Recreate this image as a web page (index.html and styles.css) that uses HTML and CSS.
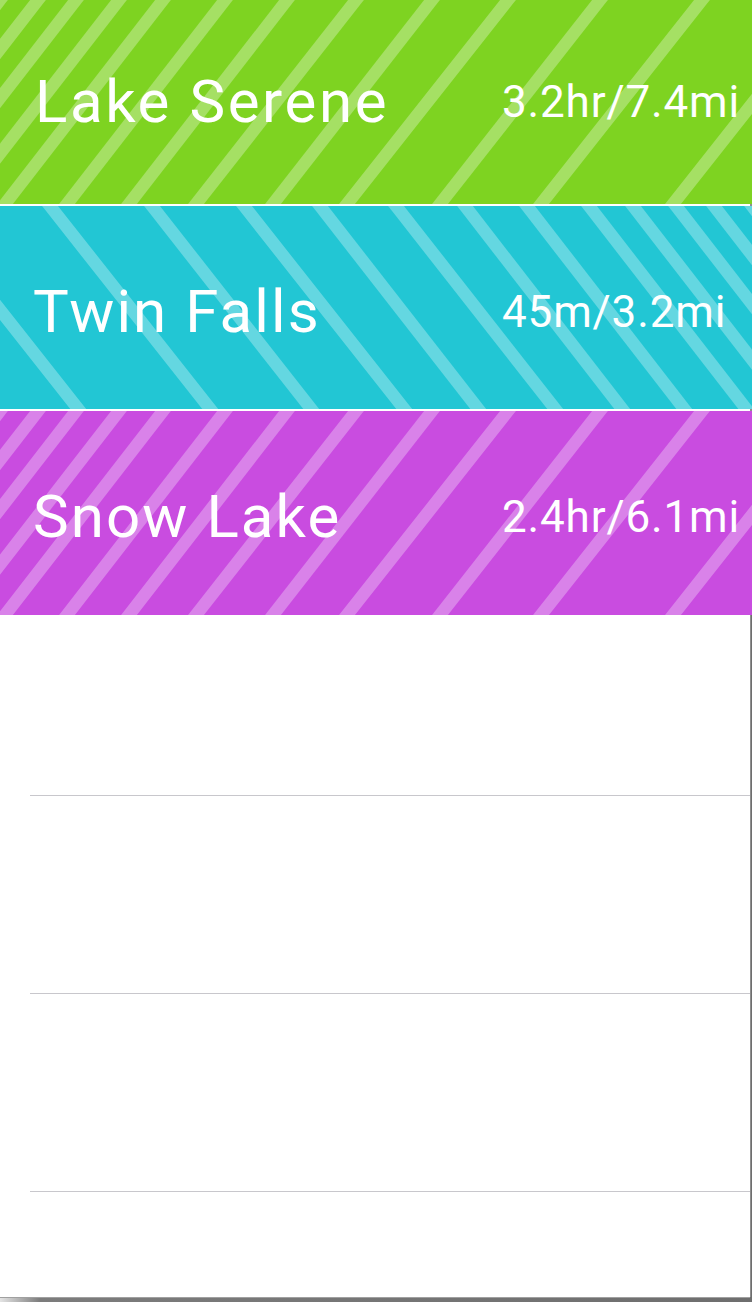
FILE: index.html
```html
<!DOCTYPE html>
<html lang="en">
<head>
<meta charset="utf-8">
<title>Hikes</title>
<link rel="stylesheet" href="styles.css">
</head>
<body>
<div class="window">
  <div class="screen">
    <ul class="hikes">
      <li class="hike hike--green">
        <span class="hike__name hike__name--wide">Lake Serene</span>
        <span class="hike__time">3.2hr/7.4mi</span>
      </li>
      <li class="hike hike--cyan hike--low">
        <span class="hike__name">Twin Falls</span>
        <span class="hike__time">45m/3.2mi</span>
      </li>
      <li class="hike hike--magenta hike--low">
        <span class="hike__name">Snow Lake</span>
        <span class="hike__time">2.4hr/6.1mi</span>
      </li>
    </ul>
    <div class="empty">
      <div class="empty__row empty__row--first"></div>
      <div class="empty__row"></div>
      <div class="empty__row"></div>
      <div class="empty__row empty__row--last"></div>
    </div>
  </div>
</div>
</body>
</html>
```

FILE: styles.css
```css
* { box-sizing: border-box; }

html, body {
  margin: 0;
  padding: 0;
  background: #ffffff;
}

body {
  font-family: Roboto, "Noto Sans", "Liberation Sans", sans-serif;
}

.window {
  width: 752px;
  height: 1302px;
  background: linear-gradient(to right, #e4e4e4 0px, #7c7c7c 40px, #6e6e6e 100%);
  overflow: hidden;
}

.screen {
  width: 750px;
  height: 1297px;
  background: #ffffff;
  box-shadow: 1px 0 0 #8f8f8f, 0 1px 0 #a0a0a0;
}

.hikes {
  list-style: none;
  margin: 0 -2px 0 0;
  padding: 0;
  display: flex;
  flex-direction: column;
  gap: 2px;
  background: linear-gradient(to right, #ffffff 750px, #8f8f8f 750px);
}

.hike {
  height: 204px;
  display: flex;
  align-items: center;
  padding-left: 33px;
  color: #ffffff;
  background-repeat: no-repeat;
  background-size: 752px 204px;
}

.hike--low {
  padding-top: 8px;
}

.hike--cyan {
  height: 203px;
}

.hike--green {
  background-color: #7ed321;
  background-image: url("data:image/svg+xml,%3Csvg xmlns='http://www.w3.org/2000/svg' width='752' height='204' viewBox='0 0 752 204'%3E%3Cg stroke='white' stroke-opacity='0.3' stroke-width='12.5' stroke-linecap='square'%3E%3Cline x1='0' y1='0' x2='-158' y2='204'/%3E%3Cline x1='38' y1='0' x2='-120' y2='204'/%3E%3Cline x1='76' y1='0' x2='-82' y2='204'/%3E%3Cline x1='119' y1='0' x2='-39' y2='204'/%3E%3Cline x1='163' y1='0' x2='5' y2='204'/%3E%3Cline x1='225' y1='0' x2='67' y2='204'/%3E%3Cline x1='287' y1='0' x2='129' y2='204'/%3E%3Cline x1='356' y1='0' x2='196' y2='204'/%3E%3Cline x1='432' y1='0' x2='273' y2='204'/%3E%3Cline x1='508' y1='0' x2='347' y2='204'/%3E%3Cline x1='600' y1='0' x2='440' y2='204'/%3E%3Cline x1='702' y1='0' x2='541' y2='204'/%3E%3Cline x1='834' y1='0' x2='673' y2='204'/%3E%3Cline x1='980' y1='0' x2='820' y2='204'/%3E%3C/g%3E%3C/svg%3E");
}

.hike--magenta {
  background-color: #c94ce0;
  background-image: url("data:image/svg+xml,%3Csvg xmlns='http://www.w3.org/2000/svg' width='752' height='204' viewBox='0 0 752 204'%3E%3Cg stroke='white' stroke-opacity='0.3' stroke-width='12.5' stroke-linecap='square'%3E%3Cline x1='0' y1='0' x2='-158' y2='204'/%3E%3Cline x1='38' y1='0' x2='-120' y2='204'/%3E%3Cline x1='76' y1='0' x2='-82' y2='204'/%3E%3Cline x1='119' y1='0' x2='-39' y2='204'/%3E%3Cline x1='163' y1='0' x2='5' y2='204'/%3E%3Cline x1='225' y1='0' x2='67' y2='204'/%3E%3Cline x1='287' y1='0' x2='129' y2='204'/%3E%3Cline x1='356' y1='0' x2='196' y2='204'/%3E%3Cline x1='432' y1='0' x2='273' y2='204'/%3E%3Cline x1='508' y1='0' x2='347' y2='204'/%3E%3Cline x1='600' y1='0' x2='440' y2='204'/%3E%3Cline x1='702' y1='0' x2='541' y2='204'/%3E%3Cline x1='834' y1='0' x2='673' y2='204'/%3E%3Cline x1='980' y1='0' x2='820' y2='204'/%3E%3C/g%3E%3C/svg%3E");
}

.hike--cyan {
  background-color: #22c6d4;
  background-image: url("data:image/svg+xml,%3Csvg xmlns='http://www.w3.org/2000/svg' width='752' height='204' viewBox='0 0 752 204'%3E%3Cg transform='matrix(-1 0 0 1 752 0)' stroke='white' stroke-opacity='0.3' stroke-width='12.5' stroke-linecap='square'%3E%3Cline x1='0' y1='0' x2='-158' y2='204'/%3E%3Cline x1='38' y1='0' x2='-120' y2='204'/%3E%3Cline x1='76' y1='0' x2='-82' y2='204'/%3E%3Cline x1='119' y1='0' x2='-39' y2='204'/%3E%3Cline x1='163' y1='0' x2='5' y2='204'/%3E%3Cline x1='225' y1='0' x2='67' y2='204'/%3E%3Cline x1='287' y1='0' x2='129' y2='204'/%3E%3Cline x1='356' y1='0' x2='196' y2='204'/%3E%3Cline x1='432' y1='0' x2='273' y2='204'/%3E%3Cline x1='508' y1='0' x2='347' y2='204'/%3E%3Cline x1='600' y1='0' x2='440' y2='204'/%3E%3Cline x1='702' y1='0' x2='541' y2='204'/%3E%3Cline x1='834' y1='0' x2='673' y2='204'/%3E%3Cline x1='980' y1='0' x2='820' y2='204'/%3E%3C/g%3E%3C/svg%3E");
}

.hike__name {
  flex: 0 0 469px;
  font-size: 60px;
  line-height: 60px;
  font-weight: 400;
  letter-spacing: 2.1px;
  white-space: nowrap;
}

.hike__name--wide {
  padding-left: 2px;
  letter-spacing: 2.6px;
}

.hike__time {
  font-size: 44px;
  line-height: 44px;
  font-weight: 400;
  letter-spacing: 0.85px;
  white-space: nowrap;
}

.empty {
  display: flex;
  flex-direction: column;
}

.empty__row {
  height: 198px;
  border-bottom: 1px solid #c8c7cc;
  margin-left: 30px;
}

.empty__row--first {
  height: 181px;
}

.empty__row--last {
  border-bottom: none;
  height: 106px;
}
```
